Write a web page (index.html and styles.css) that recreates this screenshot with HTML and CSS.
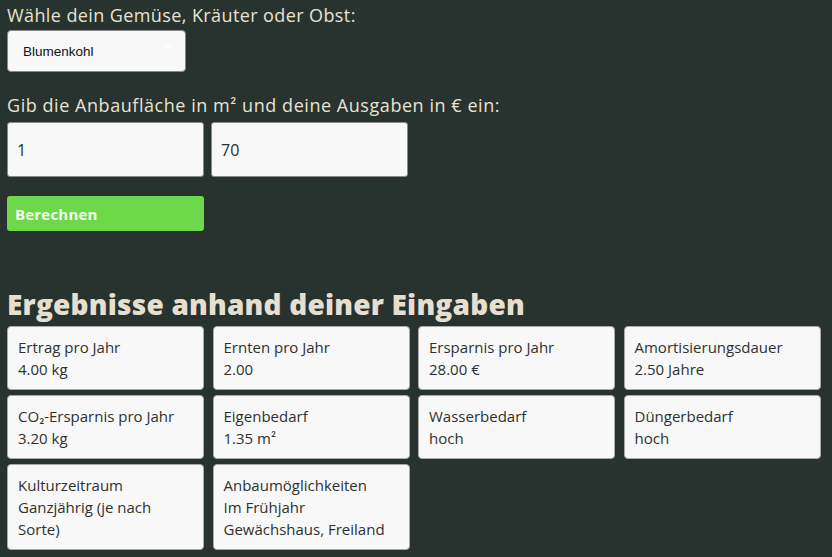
FILE: index.html
```html
<!DOCTYPE html>
<html lang="de">
<head>
<meta charset="utf-8">
<link rel="stylesheet" href="styles.css">
</head>
<body>
<main class="page">
  <form class="calc">
    <label class="label">Wähle dein Gemüse, Kräuter oder Obst:</label>
    <div class="select">
      <span class="select-text">Blumenkohl</span>
      <span class="caret"></span>
    </div>
    <label class="label label-2">Gib die Anbaufläche in m<span class="sup">²</span> und deine Ausgaben in € ein:</label>
    <div class="inputs">
      <div class="input">1</div>
      <div class="input">70</div>
    </div>
    <div class="button">Berechnen</div>
  </form>
  <h2 class="heading">Ergebnisse anhand deiner Eingaben</h2>
  <div class="grid">
    <div class="card"><div>Ertrag pro Jahr</div><div>4.00 kg</div></div>
    <div class="card"><div>Ernten pro Jahr</div><div>2.00</div></div>
    <div class="card"><div>Ersparnis pro Jahr</div><div>28.00 €</div></div>
    <div class="card"><div>Amortisierungsdauer</div><div>2.50 Jahre</div></div>
    <div class="card"><div>CO<span class="sub">₂</span>-Ersparnis pro Jahr</div><div>3.20 kg</div></div>
    <div class="card"><div>Eigenbedarf</div><div>1.35 m<span class="sup">²</span></div></div>
    <div class="card"><div>Wasserbedarf</div><div>hoch</div></div>
    <div class="card"><div>Düngerbedarf</div><div>hoch</div></div>
    <div class="card"><div>Kulturzeitraum</div><div>Ganzjährig (je nach Sorte)</div></div>
    <div class="card"><div>Anbaumöglichkeiten</div><div>Im Frühjahr</div><div>Gewächshaus, Freiland</div></div>
  </div>
</main>
</body>
</html>
```
FILE: styles.css
```css
html, body {
  margin: 0;
  padding: 0;
  background: #28332f;
}
body {
  font-family: "Open Sans", Lato, sans-serif;
  color: #e9e2d3;
}
.page {
  padding: 3px 7px 0 7px;
}
.calc {
  display: flex;
  flex-direction: column;
  align-items: flex-start;
}
.label {
  font-size: 18px;
  line-height: 24px;
  letter-spacing: 0.4px;
  color: #e9e2d3;
}
.label-2 {
  margin-top: 21px;
  letter-spacing: 0.55px;
}
.sup, .sub {
  font-family: Lato, sans-serif;
}
.select {
  margin-top: 3px;
  width: 179px;
  height: 42px;
  box-sizing: border-box;
  background: #f8f8f8;
  border: 1px solid #888;
  border-radius: 4px;
  display: flex;
  align-items: center;
  justify-content: space-between;
  padding: 0 13px 0 15px;
}
.select-text {
  font-family: "Liberation Sans", Arial, sans-serif;
  font-size: 13.5px;
  color: #111;
}
.caret {
  align-self: flex-start;
  margin-top: 14px;
  width: 0;
  height: 0;
  border-left: 4px solid transparent;
  border-right: 4px solid transparent;
  border-top: 4px solid #ffffff;
}
.inputs {
  margin-top: 5px;
  display: flex;
  gap: 7px;
}
.input {
  width: 197px;
  height: 55px;
  box-sizing: border-box;
  background: #f8f8f8;
  border: 1px solid #888;
  border-radius: 3px;
  display: flex;
  align-items: center;
  padding-left: 9px;
  font-size: 16px;
  color: #2a2f2d;
}
.button {
  margin-top: 19px;
  width: 197px;
  height: 35px;
  box-sizing: border-box;
  background: #6cd84a;
  border-radius: 3px;
  display: flex;
  align-items: center;
  padding-left: 8px;
  font-size: 15px;
  font-weight: 700;
  letter-spacing: 0.2px;
  color: #f4fbef;
}
.heading {
  margin: 57px 0 6px 0;
  font-size: 28px;
  line-height: 32px;
  font-weight: 800;
  letter-spacing: 0.2px;
  color: #e6dfd1;
}
.grid {
  display: grid;
  grid-template-columns: repeat(4, 197px);
  column-gap: 8.5px;
  row-gap: 5px;
}
.card {
  background: #f8f8f8;
  border: 1px solid #aaa;
  border-radius: 4px;
  padding: 9px 10px 9px 10px;
  font-size: 15px;
  line-height: 22px;
  letter-spacing: 0;
  color: #2d3230;
}
```
